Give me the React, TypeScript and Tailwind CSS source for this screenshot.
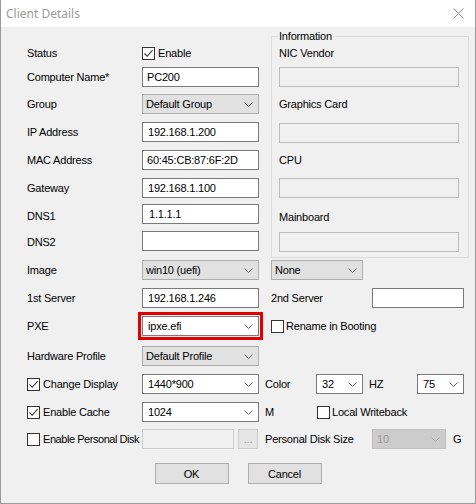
import React from "react";

const Check = ({ checked }: { checked?: boolean }) => (
  <span className="w-[13px] h-[13px] border border-[#333333] bg-white flex items-center justify-center shrink-0">
    {checked && (
      <svg width="11" height="11" viewBox="0 0 11 11">
        <path d="M1.5 5.5 L4.2 8.3 L9.6 2.2" stroke="#333333" strokeWidth="1.1" fill="none" />
      </svg>
    )}
  </span>
);

const Chevron = ({ color = "#606060" }: { color?: string }) => (
  <svg width="9" height="5" viewBox="0 0 9 5" className="shrink-0">
    <path d="M0.5 0.5 L4.5 4.5 L8.5 0.5" stroke={color} strokeWidth="1" fill="none" />
  </svg>
);

const GraySelect = ({ text, w }: { text: string; w: string }) => (
  <div className={`${w} h-[20px] bg-[#e1e1e1] border border-[#adadad] flex items-center pl-[3px] pr-[5px] justify-between shrink-0`}>
    <span>{text}</span>
    <Chevron />
  </div>
);

const WhiteSelect = ({ text, w }: { text: string; w: string }) => (
  <div className={`${w} h-[20px] bg-white border border-[#7a7a7a] flex items-center pl-[5px] pr-[5px] justify-between shrink-0`}>
    <span>{text}</span>
    <Chevron />
  </div>
);

const Input = ({ text, w, pl }: { text?: string; w: string; pl: string }) => (
  <div className={`${w} ${pl} h-[20px] bg-white border border-[#7a7a7a] flex items-center shrink-0`}>
    <span>{text}</span>
  </div>
);

const InfoBox = () => <div className="w-[180px] h-[20px] border border-[#bcbcbc] bg-[#f0f0f0]" />;

export default function App() {
  return (
    <div className="w-[476px] h-[504px] font-['Liberation_Sans',Arial,sans-serif] text-[11px] leading-[14px] tracking-[-0.2px] text-black flex flex-col bg-[#f0f0f0]">
      {/* Title bar */}
      <div className="h-[27px] bg-white flex items-center justify-between pl-[5px] pr-[11px] border-l border-r border-[#9a9a9a] shrink-0">
        <span className="text-[12px] tracking-normal text-[#9a9a9a] font-['Noto_Sans','Liberation_Sans',sans-serif]">Client Details</span>
        <svg width="11" height="11" viewBox="0 0 11 11">
          <path d="M0.5 0.5 L10.5 10.5 M10.5 0.5 L0.5 10.5" stroke="#8a8a8a" strokeWidth="1" />
        </svg>
      </div>

      {/* Body */}
      <div className="flex-1 flex flex-col border-l border-r border-b border-[#9a9a9a] pl-[26px]">
        {/* Top section */}
        <div className="flex items-start">
          <div className="flex flex-col w-[232px]">
            <div className="mt-[16px] h-[20px] flex items-center">
              <span className="w-[115px] shrink-0">Status</span>
              <span className="flex items-center gap-[3px]">
                <Check checked />
                <span>Enable</span>
              </span>
            </div>
            <div className="mt-[4px] h-[20px] flex items-center">
              <span className="w-[115px] shrink-0">Computer Name*</span>
              <Input text="PC200" w="w-[117px]" pl="pl-[4px]" />
            </div>
            <div className="mt-[7px] h-[20px] flex items-center">
              <span className="w-[115px] shrink-0">Group</span>
              <GraySelect text="Default Group" w="w-[117px]" />
            </div>
            <div className="mt-[8px] h-[20px] flex items-center">
              <span className="w-[115px] shrink-0">IP Address</span>
              <Input text="192.168.1.200" w="w-[117px]" pl="pl-[5px]" />
            </div>
            <div className="mt-[8px] h-[20px] flex items-center">
              <span className="w-[115px] shrink-0">MAC Address</span>
              <Input text="60:45:CB:87:6F:2D" w="w-[117px]" pl="pl-[4px]" />
            </div>
            <div className="mt-[8px] h-[20px] flex items-center">
              <span className="w-[115px] shrink-0">Gateway</span>
              <Input text="192.168.1.100" w="w-[117px]" pl="pl-[5px]" />
            </div>
            <div className="mt-[6px] h-[20px] flex items-center">
              <span className="w-[115px] shrink-0 pt-[4px]">DNS1</span>
              <Input text="1.1.1.1" w="w-[117px]" pl="pl-[6px]" />
            </div>
            <div className="mt-[7px] h-[20px] flex items-center">
              <span className="w-[115px] shrink-0 pt-[2px]">DNS2</span>
              <Input w="w-[117px]" pl="pl-[4px]" />
            </div>
          </div>

          {/* Information group box */}
          <div className="relative ml-[12px] mt-[9px] w-[198px] h-[222px] border border-[#dcdcdc] pl-[7px] flex flex-col">
            <span className="absolute left-[6px] top-[-8px] px-[1px] bg-[#f0f0f0]">Information</span>
            <span className="mt-[9px]">NIC Vendor</span>
            <div className="mt-[7px]"><InfoBox /></div>
            <span className="mt-[10px]">Graphics Card</span>
            <div className="mt-[12px]"><InfoBox /></div>
            <span className="mt-[10px]">CPU</span>
            <div className="mt-[11px]"><InfoBox /></div>
            <span className="mt-[12px]">Mainboard</span>
            <div className="mt-[8px]"><InfoBox /></div>
          </div>
        </div>

        {/* Full width rows */}
        <div className="mt-[2px] h-[20px] flex items-center">
          <span className="w-[115px] shrink-0">Image</span>
          <GraySelect text="win10 (uefi)" w="w-[117px]" />
          <div className="ml-[12px]">
            <GraySelect text="None" w="w-[92px]" />
          </div>
        </div>
        <div className="mt-[8px] h-[20px] flex items-center">
          <span className="w-[115px] shrink-0">1st Server</span>
          <Input text="192.168.1.246" w="w-[117px]" pl="pl-[5px]" />
          <span className="ml-[12px] w-[101px] shrink-0">2nd Server</span>
          <Input w="w-[92px]" pl="pl-[4px]" />
        </div>
        <div className="mt-[8px] h-[20px] flex items-center">
          <span className="w-[115px] shrink-0">PXE</span>
          <div className="-m-[4px] border-[3px] border-[#e10000] p-px shrink-0">
            <WhiteSelect text="ipxe.efi" w="w-[117px]" />
          </div>
          <span className="ml-[12px] flex items-center gap-[2px]">
            <Check />
            <span>Rename in Booting</span>
          </span>
        </div>
        <div className="mt-[10px] h-[20px] flex items-center">
          <span className="w-[115px] shrink-0">Hardware Profile</span>
          <GraySelect text="Default Profile" w="w-[117px]" />
        </div>
        <div className="mt-[8px] h-[20px] flex items-center">
          <span className="w-[115px] shrink-0 flex items-center gap-[3px]">
            <Check checked />
            <span>Change Display</span>
          </span>
          <WhiteSelect text="1440*900" w="w-[117px]" />
          <span className="ml-[6px] w-[51px] shrink-0">Color</span>
          <WhiteSelect text="32" w="w-[47px]" />
          <span className="ml-[6px] w-[48px] shrink-0">HZ</span>
          <WhiteSelect text="75" w="w-[47px]" />
        </div>
        <div className="mt-[8px] h-[20px] flex items-center">
          <span className="w-[115px] shrink-0 flex items-center gap-[3px]">
            <Check checked />
            <span>Enable Cache</span>
          </span>
          <WhiteSelect text="1024" w="w-[117px]" />
          <span className="ml-[6px] w-[52px] shrink-0">M</span>
          <span className="flex items-center gap-[2px]">
            <Check />
            <span>Local Writeback</span>
          </span>
        </div>
        <div className="mt-[7px] h-[20px] flex items-center">
          <span className="w-[115px] shrink-0 flex items-center gap-[3px] whitespace-nowrap">
            <Check />
            <span className="tracking-[-0.45px]">Enable Personal Disk</span>
          </span>
          <div className="w-[92px] h-[20px] border border-[#cccccc] bg-[#f0f0f0] shrink-0" />
          <div className="ml-[4px] w-[20px] h-[20px] border border-[#cccccc] bg-[#e6e6e6] flex items-center justify-center text-[#a0a0a0] shrink-0">
            ...
          </div>
          <span className="ml-[7px] w-[107px] shrink-0">Personal Disk Size</span>
          <div className="w-[74px] h-[20px] bg-[#cccccc] border border-[#bfbfbf] flex items-center justify-between pl-[4px] pr-[5px] text-[#9a9a9a] shrink-0">
            <span>10</span>
            <Chevron color="#a8a8a8" />
          </div>
          <span className="ml-[7px]">G</span>
        </div>

        {/* Buttons */}
        <div className="mt-[14px] flex justify-center gap-[19px] pr-[26px]">
          <button className="w-[74px] h-[21px] bg-[#e1e1e1] border border-[#adadad] flex items-center justify-center">OK</button>
          <button className="w-[74px] h-[21px] bg-[#e1e1e1] border border-[#adadad] flex items-center justify-center">Cancel</button>
        </div>
      </div>
    </div>
  );
}
